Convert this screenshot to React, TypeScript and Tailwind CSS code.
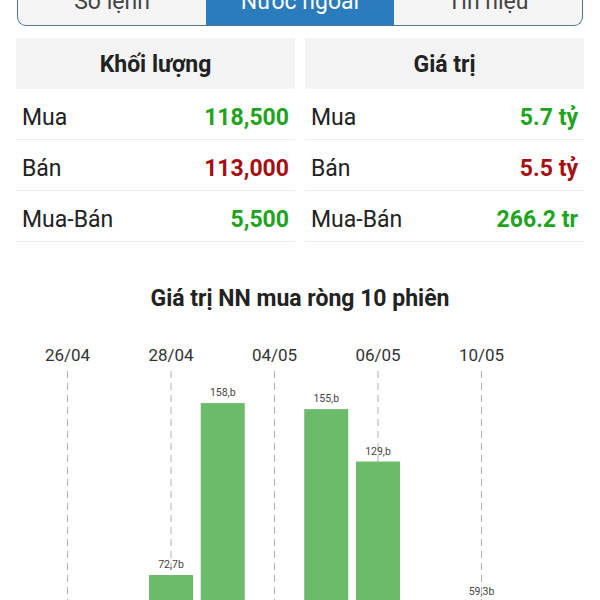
const TABS = ['Sổ lệnh', 'Nước ngoài', 'Tín hiệu']

type Row = { label: string; value: string; tone: 'up' | 'down' }

const VOLUME: Row[] = [
  { label: 'Mua', value: '118,500', tone: 'up' },
  { label: 'Bán', value: '113,000', tone: 'down' },
  { label: 'Mua-Bán', value: '5,500', tone: 'up' },
]

const VALUE: Row[] = [
  { label: 'Mua', value: '5.7 tỷ', tone: 'up' },
  { label: 'Bán', value: '5.5 tỷ', tone: 'down' },
  { label: 'Mua-Bán', value: '266.2 tr', tone: 'up' },
]

// 10 phiên, chỉ hiện nhãn ngày mỗi 2 phiên
const SESSIONS = [
  { date: '26/04', value: null },
  { date: '27/04', value: null },
  { date: '28/04', value: 72.7, label: '72,7b' },
  { date: '29/04', value: 158, label: '158,b' },
  { date: '04/05', value: null },
  { date: '05/05', value: 155, label: '155,b' },
  { date: '06/05', value: 129, label: '129,b' },
  { date: '07/05', value: null },
  { date: '10/05', value: 59.3, label: '59,3b' },
  { date: '11/05', value: null },
] as { date: string; value: number | null; label?: string }[]

const X0 = 67.5
const STEP = 51.75
const BASE = 410.6
const SCALE = 2.016
const BAR_W = 44

function StatTable({ title, rows }: { title: string; rows: Row[] }) {
  return (
    <div>
      <div className="flex h-[51px] items-center justify-center bg-[#f4f4f4] pt-[3px] text-[23px] font-bold text-[#222]">
        {title}
      </div>
      {rows.map(r => (
        <div
          key={r.label}
          className="flex h-[51px] items-center justify-between border-b border-[#ececec] px-[6px] pt-[9px]"
        >
          <span className="text-[23px] text-[#222]">{r.label}</span>
          <span
            className={`text-[23px] font-bold ${r.tone === 'up' ? 'text-[#20a320]' : 'text-[#a50f12]'}`}
          >
            {r.value}
          </span>
        </div>
      ))}
    </div>
  )
}

function NetBuyChart() {
  return (
    <svg width={600} height={300} className="block">
      {SESSIONS.map((s, i) => {
        if (i % 2 !== 0) return null
        const x = X0 + i * STEP
        return (
          <g key={s.date}>
            <text x={x} y={50} textAnchor="middle" fontSize={17} fill="#333">
              {s.date}
            </text>
            <line x1={x} y1={60} x2={x} y2={300} stroke="#b0b0b0" strokeWidth={1} strokeDasharray="7 5" />
          </g>
        )
      })}
      {SESSIONS.map((s, i) => {
        if (s.value === null) return null
        const x = X0 + i * STEP
        const top = BASE - s.value * SCALE
        return (
          <g key={s.date + 'bar'}>
            <rect x={x - BAR_W / 2} y={top} width={BAR_W} height={BASE - top} fill="#6cbb6a" />
            <text x={x} y={top - 7} textAnchor="middle" fontSize={10.5} fill="#444">
              {s.label}
            </text>
          </g>
        )
      })}
    </svg>
  )
}

export default function App() {
  return (
    <div className="h-[600px] w-[600px] overflow-hidden bg-white font-['Roboto',sans-serif]">
      <div className="px-[17px]">
        <div className="-mt-[20px] flex h-[46px] overflow-hidden rounded-b-[9px] border-[1.5px] border-t-0 border-[#4d7893] bg-[#f5f5f5]">
          {TABS.map((t, i) => (
            <div
              key={t}
              className={`flex flex-1 items-center justify-center text-[23px] ${
                i === 1 ? 'bg-[#2a7cbd] text-white' : 'text-[#444]'
              }`}
            >
              {t}
            </div>
          ))}
        </div>
      </div>

      <div className="mt-[12px] grid grid-cols-2 gap-[10px] px-4">
        <StatTable title="Khối lượng" rows={VOLUME} />
        <StatTable title="Giá trị" rows={VALUE} />
      </div>

      <h2 className="mt-[43px] text-center text-[23px] leading-[28px] font-bold text-[#222]">
        Giá trị NN mua ròng 10 phiên
      </h2>

      <div className="-mt-[2px]">
        <NetBuyChart />
      </div>
    </div>
  )
}
